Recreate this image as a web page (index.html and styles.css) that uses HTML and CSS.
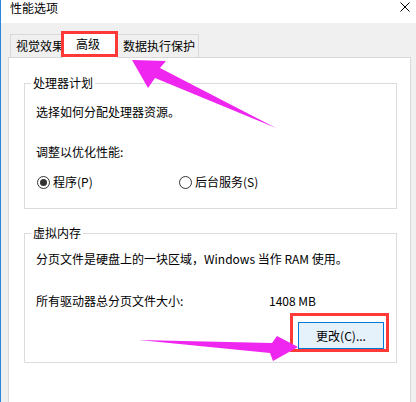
FILE: index.html
```html
<!DOCTYPE html>
<html lang="zh-CN">
<head>
<meta charset="utf-8">
<title>性能选项</title>
<link rel="stylesheet" href="styles.css">
</head>
<body>
<div class="window">
  <div class="titlebar">
    <span class="title">性能选项</span>
    <svg class="close" width="10" height="10" viewBox="0 0 10 10"><path d="M0.5 0.5L9.5 9.5M9.5 0.5L0.5 9.5" stroke="#000" stroke-width="1" fill="none"/></svg>
  </div>
  <div class="client">
    <div class="tabs">
      <div class="tab t1">视觉效果</div>
      <div class="tab sel">高级<span class="mark"></span></div>
      <div class="tab t3">数据执行保护</div>
    </div>
    <div class="panel">
      <fieldset class="group g1">
        <legend>处理器计划</legend>
        <p class="line first">选择如何分配处理器资源。</p>
        <p class="line second">调整以优化性能:</p>
        <div class="radios">
          <label class="radio"><span class="circle on"></span>程序(P)</label>
          <label class="radio"><span class="circle"></span>后台服务(S)</label>
        </div>
      </fieldset>
      <fieldset class="group g2">
        <legend>虚拟内存</legend>
        <p class="line vfirst">分页文件是硬盘上的一块区域，Windows 当作 RAM 使用。</p>
        <div class="sizerow">
          <span>所有驱动器总分页文件大小:</span>
          <span>1408 MB</span>
        </div>
        <div class="btnrow">
          <button class="btn">更改(C)...<span class="mark"></span></button>
        </div>
      </fieldset>
    </div>
  </div>
  <svg class="arrows" width="416" height="402" viewBox="0 0 416 402">
    <polygon points="132,60 166,61 160,68 276,128 155,78 148,88" fill="#ef26ef"/>
    <polygon points="139,340 272,343 277,336 298,347 273,361 270,353" fill="#ef26ef"/>
  </svg>
</div>
</body>
</html>
```
FILE: styles.css
```css
html, body {
  margin: 0;
  padding: 0;
  background: #f0f0f0;
}
body {
  width: 416px;
  height: 402px;
  overflow: hidden;
  font-family: "Noto Sans CJK SC", "Microsoft YaHei", sans-serif;
  font-size: 12px;
  color: #000;
}
.window {
  position: relative;
  width: 416px;
  height: 402px;
  box-sizing: border-box;
  border-left: 1px solid #2b87d8;
  display: flex;
  flex-direction: column;
}
.titlebar {
  height: 23px;
  flex: none;
  background: #fff;
  display: flex;
  justify-content: space-between;
  align-items: flex-start;
  padding: 0 6px 0 9px;
}
.title {
  line-height: 16px;
}
.close {
  margin-top: 2px;
}
.client {
  flex: 1;
  background: #f0f0f0;
  padding: 9px 5px 0 7px;
  display: flex;
  flex-direction: column;
}
.tabs {
  display: flex;
  align-items: flex-end;
  height: 25px;
  padding-left: 2px;
  flex: none;
}
.tab {
  box-sizing: border-box;
  height: 23px;
  line-height: 21px;
  border: 1px solid #d9d9d9;
  border-bottom: none;
  background: #f0f0f0;
  padding-left: 5px;
  white-space: nowrap;
  overflow: hidden;
}
.t1 { width: 54px; margin-right: -2px; }
.t3 { width: 82px; margin-left: -1px; }
.tab.sel {
  position: relative;
  z-index: 2;
  width: 56px;
  height: 26px;
  margin-bottom: -1px;
  background: #fff;
  padding-left: 13px;
  line-height: 21px;
  overflow: visible;
}
.tab.sel .mark {
  position: absolute;
  left: -2px;
  top: -2px;
  right: -1px;
  bottom: 1px;
  border: 3px solid #ff3838;
}
.panel {
  flex: 1;
  background: #fff;
  border: 1px solid #d9d9d9;
  border-bottom: none;
  padding: 0 13px 0 15px;
  display: flex;
  flex-direction: column;
}
.group {
  margin: 0;
  border: 1px solid #dcdcdc;
  padding: 0 0 18px 11px;
  min-width: 0;
}
.group legend {
  padding: 0 2px;
  margin-left: -5px;
  line-height: 14px;
}
.g1 { margin-top: 18px; }
.g2 { margin-top: 17px; padding-bottom: 13px; }
.line {
  margin: 0;
  line-height: 16px;
}
.first { margin-top: 14px; }
.second { margin-top: 24px; }
.vfirst { margin-top: 11px; }
.radios {
  margin-top: 14px;
  display: grid;
  grid-template-columns: 143px auto;
  height: 16px;
  align-items: center;
}
.radio {
  display: flex;
  align-items: center;
  line-height: 16px;
}
.radio:first-child { margin-left: 1px; }
.circle {
  box-sizing: border-box;
  width: 13px;
  height: 13px;
  border: 1px solid #333;
  border-radius: 50%;
  margin-right: 3px;
  display: flex;
  align-items: center;
  justify-content: center;
}
.circle.on::after {
  content: "";
  width: 7px;
  height: 7px;
  border-radius: 50%;
  background: #333;
}
.sizerow {
  margin-top: 26px;
  display: grid;
  grid-template-columns: 233px auto;
  line-height: 16px;
}
.btnrow {
  margin-top: 13px;
  display: flex;
  justify-content: flex-end;
  padding-right: 12px;
}
.btn {
  position: relative;
  box-sizing: border-box;
  width: 86px;
  height: 27px;
  background: #e5f1fb;
  border: 1px solid #0078d7;
  font-family: inherit;
  font-size: 12px;
  color: #000;
  padding: 0;
}
.btn .mark {
  position: absolute;
  left: -9px;
  top: -10px;
  right: -6px;
  bottom: -4px;
  border: 3px solid #ff3838;
}
.arrows {
  position: absolute;
  left: -1px;
  top: 0;
  pointer-events: none;
}
```
